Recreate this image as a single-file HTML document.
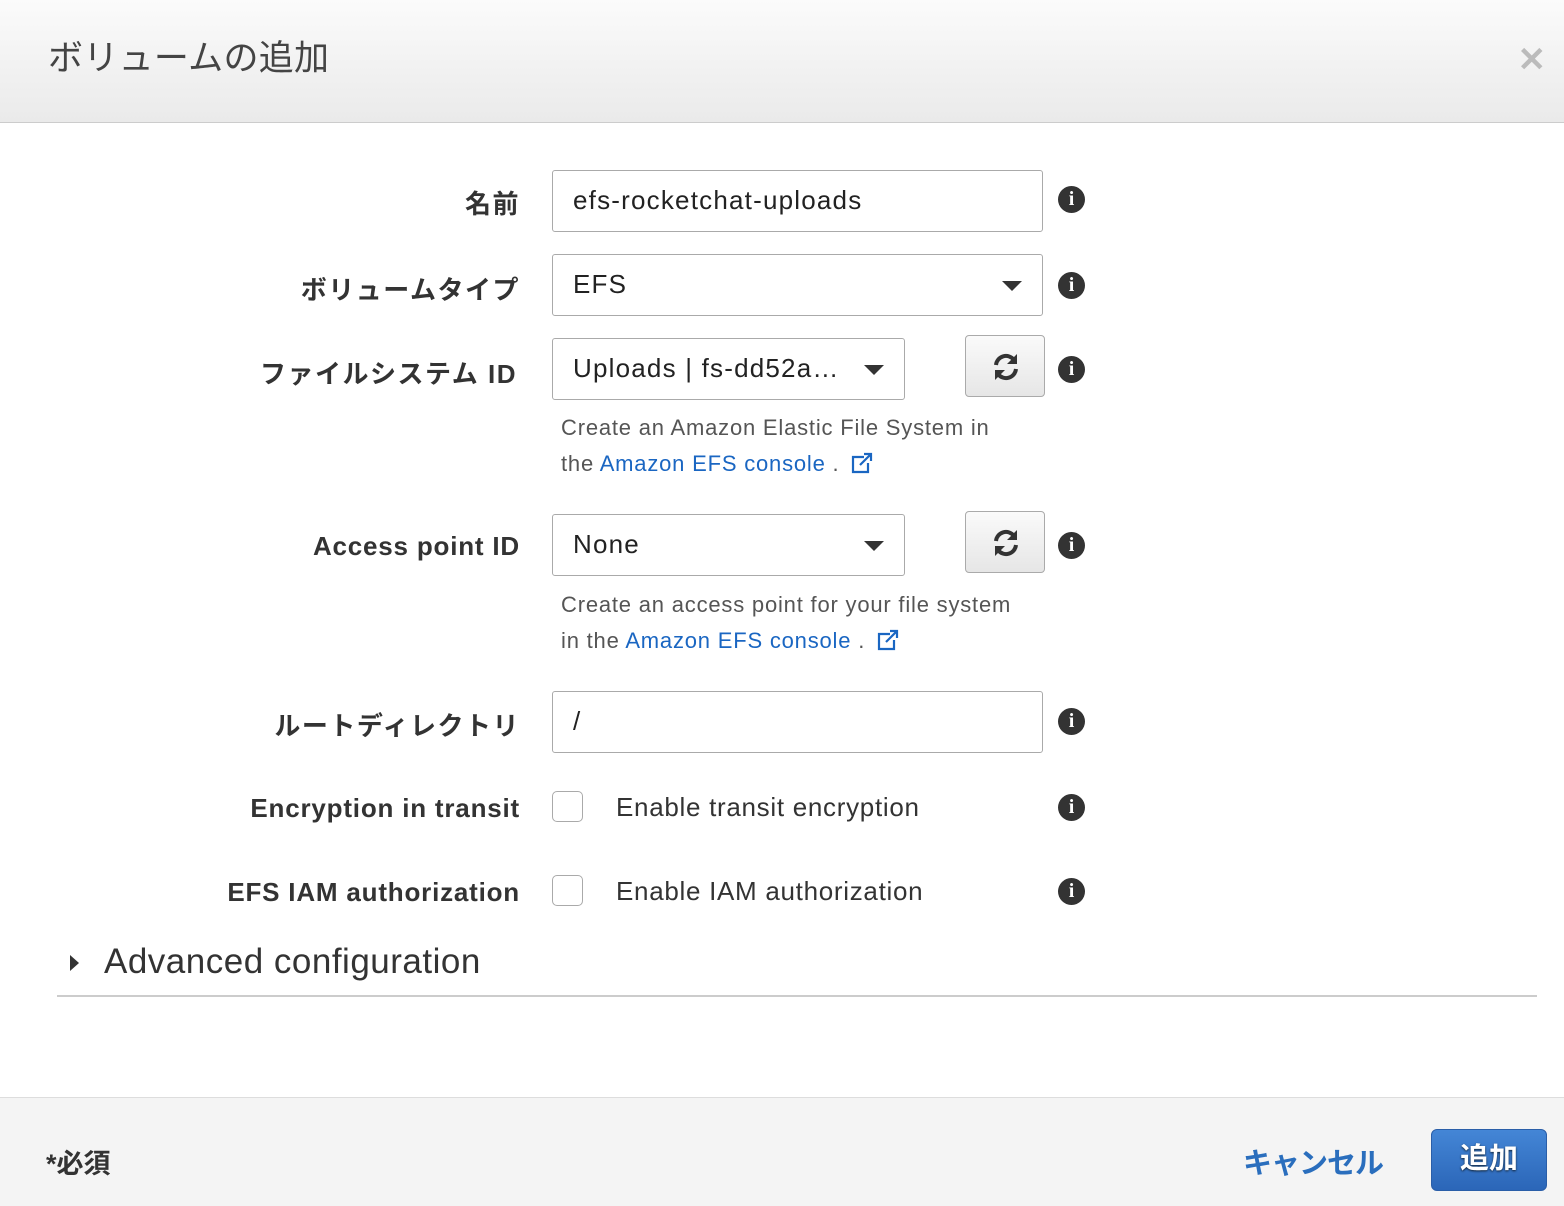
<!DOCTYPE html>
<html><head><meta charset="utf-8"><style>
*{box-sizing:border-box;margin:0;padding:0}
body{width:1564px;height:1206px;background:#fff;font-family:"Liberation Sans","Noto Sans CJK JP",sans-serif;position:relative;overflow:hidden;color:#333}
.hdr{position:absolute;left:0;top:0;width:1564px;height:123px;background:linear-gradient(#fbfbfb,#eaeaea);border-bottom:1px solid #ccc}
.hdr h1{position:absolute;left:48px;top:30px;font-size:35px;font-weight:normal;color:#444;letter-spacing:0.3px}
.x{position:absolute;right:18px;top:40px;font-size:34px;color:#bbb;font-weight:bold}
.lbl{position:absolute;right:1044px;font-size:26px;font-weight:bold;color:#333;white-space:nowrap;letter-spacing:0.8px}
.jp{letter-spacing:1.5px}
.in{position:absolute;left:552px;height:62px;border:1px solid #aaa;border-radius:3px;background:#fff;font-size:26px;padding:14px 20px;color:#222;white-space:nowrap;letter-spacing:1.2px}
.caret{position:absolute;right:20px;top:26px;width:0;height:0;border-left:10px solid transparent;border-right:10px solid transparent;border-top:10px solid #333}
.info{position:absolute;left:1058px;width:27px;height:27px;border-radius:50%;background:#333;color:#fff;font:bold 20px "Liberation Serif",serif;text-align:center;line-height:27px}
.ref{position:absolute;left:965px;width:80px;height:62px;border:1px solid #aaa;border-radius:4px;background:linear-gradient(#fafafa,#e6e6e6)}
.ref svg{position:absolute;left:25px;top:16px}
.help{position:absolute;left:561px;font-size:22px;color:#555;line-height:36px;letter-spacing:0.8px;white-space:nowrap}
.help a{color:#1a66c2;text-decoration:none}
.cb{position:absolute;left:552px;width:31px;height:31px;border:1px solid #aaa;border-radius:5px;background:#fff}
.cbl{position:absolute;left:616px;font-size:26px;color:#333;letter-spacing:0.7px}
.foot{position:absolute;left:0;top:1097px;width:1564px;height:109px;background:#f4f4f4;border-top:1px solid #ddd}
</style></head><body>
<div class="hdr"><h1>ボリュームの追加</h1><div class="x">✕</div></div>

<div class="lbl jp" style="top:184px">名前</div>
<div class="in" style="top:170px;width:491px">efs-rocketchat-uploads</div>
<div class="info" style="top:186px">i</div>

<div class="lbl jp" style="top:270px">ボリュームタイプ</div>
<div class="in" style="top:254px;width:491px">EFS<div class="caret"></div></div>
<div class="info" style="top:272px">i</div>

<div class="lbl jp" style="top:354px;right:1047px">ファイルシステム ID</div>
<div class="in" style="top:338px;width:353px">Uploads | fs-dd52a…<div class="caret"></div></div>
<div class="ref" style="top:335px"><svg width="30" height="30" viewBox="0 0 30 30"><path d="M5 13a10 10 0 0 1 18-5" fill="none" stroke="#333" stroke-width="4"/><path d="M26 2v10h-10z" fill="#333"/><path d="M25 17a10 10 0 0 1-18 5" fill="none" stroke="#333" stroke-width="4"/><path d="M4 28v-10h10z" fill="#333"/></svg></div>
<div class="info" style="top:356px">i</div>
<div class="help" style="top:410px">Create an Amazon Elastic File System in<br>the <a>Amazon EFS console</a> . <svg width="24" height="22" viewBox="0 0 24 22" style="vertical-align:-3px;margin-left:4px"><path d="M14 5H3v15h15V11" fill="none" stroke="#1a66c2" stroke-width="2.2"/><path d="M10 13l11-11M14 2h7v7" fill="none" stroke="#1a66c2" stroke-width="2.2"/></svg></div>

<div class="lbl" style="top:531px">Access point ID</div>
<div class="in" style="top:514px;width:353px">None<div class="caret"></div></div>
<div class="ref" style="top:511px"><svg width="30" height="30" viewBox="0 0 30 30"><path d="M5 13a10 10 0 0 1 18-5" fill="none" stroke="#333" stroke-width="4"/><path d="M26 2v10h-10z" fill="#333"/><path d="M25 17a10 10 0 0 1-18 5" fill="none" stroke="#333" stroke-width="4"/><path d="M4 28v-10h10z" fill="#333"/></svg></div>
<div class="info" style="top:532px">i</div>
<div class="help" style="top:587px">Create an access point for your file system<br>in the <a>Amazon EFS console</a> . <svg width="24" height="22" viewBox="0 0 24 22" style="vertical-align:-3px;margin-left:4px"><path d="M14 5H3v15h15V11" fill="none" stroke="#1a66c2" stroke-width="2.2"/><path d="M10 13l11-11M14 2h7v7" fill="none" stroke="#1a66c2" stroke-width="2.2"/></svg></div>

<div class="lbl jp" style="top:706px">ルートディレクトリ</div>
<div class="in" style="top:691px;width:491px">/</div>
<div class="info" style="top:708px">i</div>

<div class="lbl" style="top:793px">Encryption in transit</div>
<div class="cb" style="top:791px"></div>
<div class="cbl" style="top:792px">Enable transit encryption</div>
<div class="info" style="top:794px">i</div>

<div class="lbl" style="top:877px">EFS IAM authorization</div>
<div class="cb" style="top:875px"></div>
<div class="cbl" style="top:876px">Enable IAM authorization</div>
<div class="info" style="top:878px">i</div>

<div style="position:absolute;left:70px;top:955px;width:0;height:0;border-top:8px solid transparent;border-bottom:8px solid transparent;border-left:9px solid #333"></div>
<div style="position:absolute;left:104px;top:942px;font-size:35px;color:#333;letter-spacing:0.5px">Advanced configuration</div>
<div style="position:absolute;left:57px;top:995px;width:1480px;height:2px;background:#ccc"></div>

<div class="foot">
<div style="position:absolute;left:46px;top:44px;font-size:27px;font-weight:bold;color:#333">*必須</div>
<div style="position:absolute;left:1243px;top:42px;font-size:29px;font-weight:bold;color:#2a6ebd;letter-spacing:-1px">キャンセル</div>
<div style="position:absolute;left:1431px;top:31px;width:116px;height:62px;border-radius:6px;background:linear-gradient(#4486d6,#2b66b8);border:1px solid #2a5ea8;color:#fff;font-size:29px;font-weight:bold;text-align:center;line-height:58px;text-shadow:0 1px 2px #123">追加</div>
</div>
</body></html>
